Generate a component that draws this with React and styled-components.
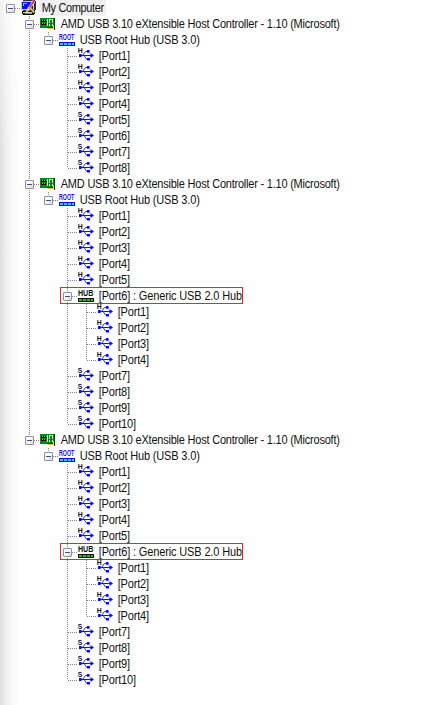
import React from "react";
import styled, { createGlobalStyle } from "styled-components";

const GlobalStyle = createGlobalStyle`
  html, body { margin: 0; padding: 0; background: #fff; overflow: hidden; }
`;

const Window = styled.main`
  box-sizing: border-box;
  width: 433px;
  height: 705px;
  padding-left: 1px;
  background: linear-gradient(180deg, rgba(255,255,255,.6) 0, rgba(255,255,255,0) 150px),
    linear-gradient(90deg, #dfdfdf 0, #ededed 5px, #f9f9f9 12px, #fff 19px);
`;

const Row = styled.div`
  position: relative;
  display: flex;
  height: 16px;
`;

const v = "repeating-linear-gradient(180deg, #868686 0 1px, transparent 1px 2px)";
const h = "repeating-linear-gradient(90deg, transparent 0 1px, #868686 1px 2px)";

const Guide = styled.span`
  flex: none;
  display: flex;
  width: 19px;
  height: 16px;
  background-image: ${(p) => (p.$line ? v : "none")};
  background-size: 1px 16px;
  background-position: 9px 0;
  background-repeat: no-repeat;
`;

const Branch = styled(Guide)`
  background-image: ${v}, ${h};
  background-size: 1px ${(p) => (p.$root ? 0 : p.$last ? 8 : 16)}px, 10px 1px;
  background-position: 9px 0, 9px 8px;
`;

const Expander = styled.span`
  box-sizing: border-box;
  display: flex;
  align-items: center;
  justify-content: center;
  width: 9px;
  height: 9px;
  margin: 4px 0 0 5px;
  border: 1px solid #919191;
  border-radius: 1px;
  background: linear-gradient(135deg, #fff 30%, #d9d9d9);
  &::before {
    content: "";
    width: 5px;
    height: 1px;
    background: #3450a4;
  }
`;

const Glyph = styled.svg`
  flex: none;
  width: 16px;
  height: 16px;
  margin-left: 1px;
  overflow: visible;
`;

const Label = styled.span`
  flex: none;
  height: 16px;
  margin-left: 2px;
  padding: 0 2px 0 3px;
  font: 12px/16px "Liberation Sans", Arial, sans-serif;
  letter-spacing: ${(p) => p.$spacing}px;
  transform: scaleX(0.917);
  transform-origin: left center;
  color: #111;
  white-space: pre;
  background: ${(p) => (p.$selected ? "#f0f0f0" : "transparent")};
`;

const Highlight = styled.span`
  position: absolute;
  left: 59px;
  top: -1px;
  box-sizing: border-box;
  width: 183px;
  height: 17px;
  border: 1px solid #e6282d;
`;

function ComputerIcon() {
  return (
    <Glyph viewBox="0 0 16 16" shapeRendering="crispEdges">
      <path d="M2 0h12v1h1v9h-1v1H2z" fill="#333" />
      <path d="M0 1h13v9H0z" fill="#c4c4d4" />
      <path d="M1 2h11v7H1z" fill="#0714f0" />
      <path d="M2 3h4v1H3v2H2z" fill="#78b8ff" />
      <path d="M1 11h11v1h2v2h-1v1H2v-1H1z" fill="#111" />
      <path d="M2 12h9v1H2z" fill="#d8d8d8" />
      <path d="M4 13h7v1H4z" fill="#888" />
      <g shapeRendering="auto" fill="none">
        <path d="M13 1 7 10" stroke="#fff" strokeWidth="2.8" />
        <path d="M13 1 8.5 7.5" stroke="#ed2020" strokeWidth="1.7" />
        <path d="M8 8 5.5 12" stroke="#e9d34b" strokeWidth="2" />
        <path d="m9 7.5 4.5 5.5" stroke="#332" strokeWidth="2.4" />
        <path d="m9 7.5 4 5" stroke="#f0da46" strokeWidth="1.5" />
      </g>
    </Glyph>
  );
}

function CardIcon() {
  return (
    <Glyph viewBox="0 0 16 16" shapeRendering="crispEdges">
      <path d="M0 2h15v10H0z" fill="#078b13" />
      <path d="M1 4h5v2H1zM1 7h5v2H1z" fill="#111" />
      <path d="M2 4h1v1H2zM4 4h1v1H4zM2 7h1v1H2zM4 7h1v1H4z" fill="#68b96c" />
      <path d="M7 3h1v7H7zM9 3h4v4H9zM9 8h1v2H9zM12 8h1v2h-1z" fill="#d8dcd0" />
      <path d="M10 4h2v3h-2z" fill="#087a12" />
      <path d="M14 2h1v12h-1zM7 11h7v1H7z" fill="#24351e" />
      <path d="M8 12h6v1H8zM13 9h1v3h-1z" fill="#dfc543" />
    </Glyph>
  );
}

function HubIcon({ text, squeeze, color, bar, light }) {
  return (
    <Glyph viewBox="0 0 16 16">
      <text transform={`translate(0 8) scale(${squeeze} 1)`} fontFamily="Liberation Sans"
        fontWeight="bold" fontSize="9.8" fill={color}>{text}</text>
      <g shapeRendering="crispEdges">
        <path d="M0 10h16v4H0z" fill={bar} />
        <path d="M1 11h3v2H1zM5 11h3v2H5zM9 11h3v2H9zM13 11h2v2h-2z" fill={light} />
      </g>
    </Glyph>
  );
}

function UsbIcon({ speed }) {
  return (
    <Glyph viewBox="0 0 16 16">
      <text x="-0.2" y="4.9" fontFamily="Liberation Sans" fontWeight="bold" fontSize="6.8" fill="#111">{speed}</text>
      <g fill="none" stroke="#1010ff">
        <path d="M1 7.5h13" strokeWidth="1.1" />
        <path d="M4.5 7.5 7.5 3.5H10M6 7.5l3 4h2" strokeWidth=".9" />
      </g>
      <path d="M1 6h2.6v3H1zM9 2h2.6v2.8H9zM9 10h3v2.6H9zM12.5 5 16 7.5l-3.5 2.5z" fill="#0808ff" />
    </Glyph>
  );
}

const ports = (codes, hubAt) =>
  [...codes].map((speed, i) =>
    i + 1 === hubAt
      ? { kind: "hub", label: `[Port${i + 1}] : Generic USB 2.0 Hub`, spacing: -0.16, marked: true, children: ports("HHHH") }
      : { kind: "usb", speed, label: `[Port${i + 1}]`, spacing: -0.2 }
  );

const controller = (children) => ({
  kind: "card",
  label: "AMD USB 3.10 eXtensible Host Controller - 1.10 (Microsoft)",
  spacing: -0.24,
  children: [{ kind: "root", label: "USB Root Hub (USB 3.0)", spacing: -0.18, children }],
});

const tree = {
  kind: "computer",
  label: "My Computer",
  spacing: -0.39,
  selected: true,
  children: [
    controller(ports("HHHHSSSS")),
    controller(ports("HHHHH-SSSS", 6)),
    controller(ports("HHHHH-SSSS", 6)),
  ],
};

function NodeIcon({ node }) {
  if (node.kind === "computer") return <ComputerIcon />;
  if (node.kind === "card") return <CardIcon />;
  if (node.kind === "root") return <HubIcon text="ROOT" squeeze={0.54} color="#1010ff" bar="#1010ee" light="#16d9ff" />;
  if (node.kind === "hub") return <HubIcon text="HUB" squeeze={0.72} color="#111" bar="#111" light="#16c51e" />;
  return <UsbIcon speed={node.speed} />;
}

function TreeNode({ node, guides = [], root = false, last = true }) {
  const children = node.children || [];
  return (
    <>
      <Row>
        {guides.map((line, i) => <Guide key={i} $line={line} />)}
        <Branch $root={root} $last={last}>{children.length > 0 && <Expander />}</Branch>
        <NodeIcon node={node} />
        <Label $spacing={node.spacing} $selected={node.selected}>{node.label}</Label>
        {node.marked && <Highlight />}
      </Row>
      {children.map((child, i) => (
        <TreeNode key={i} node={child} guides={[...guides, !last]} last={i === children.length - 1} />
      ))}
    </>
  );
}

export default function App() {
  return (
    <>
      <GlobalStyle />
      <Window><TreeNode node={tree} root /></Window>
    </>
  );
}
